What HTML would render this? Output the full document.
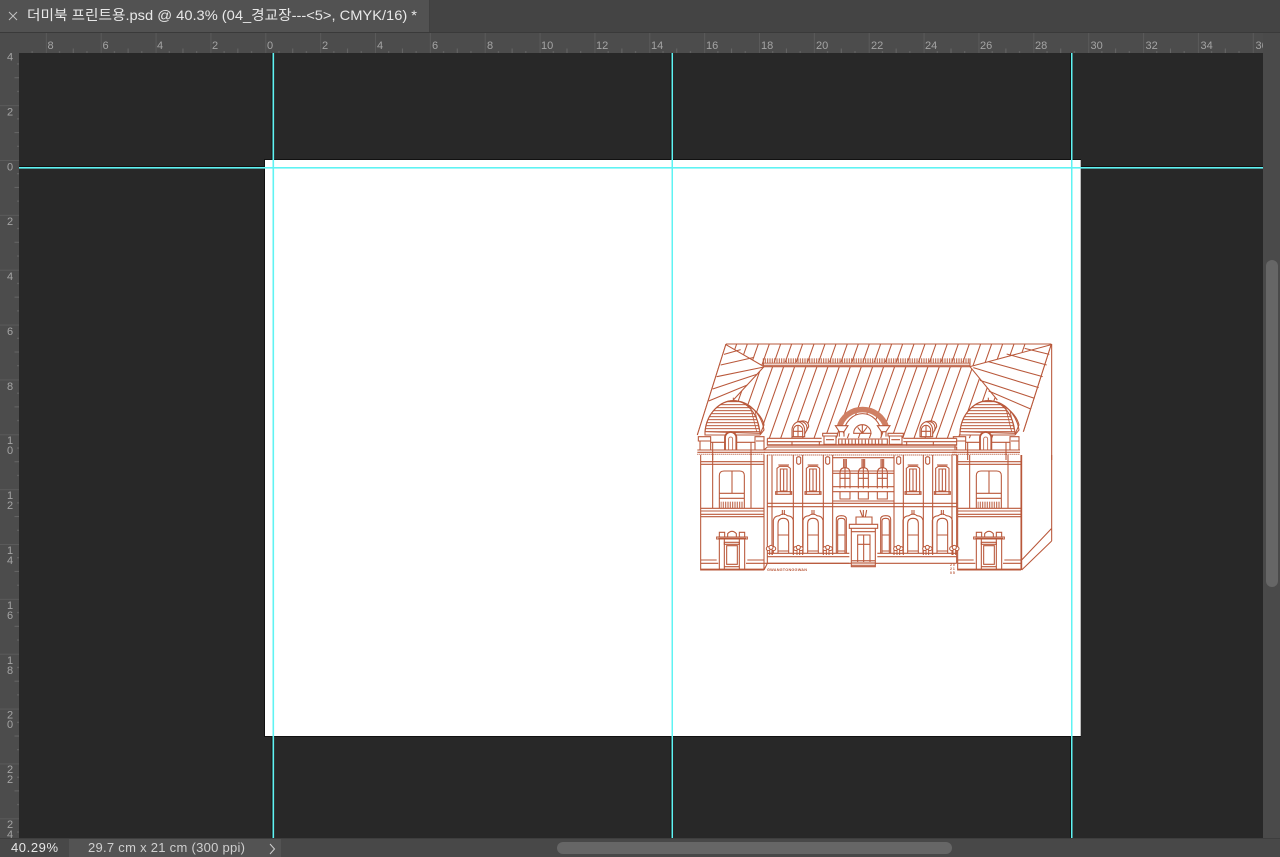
<!DOCTYPE html>
<html><head><meta charset="utf-8"><style>
html,body{margin:0;padding:0;background:#282828;width:1280px;height:857px;overflow:hidden}
svg{display:block}
text{font-family:"Liberation Sans","Noto Sans CJK KR",sans-serif}
</style></head><body>
<svg width="1280" height="857" viewBox="0 0 1280 857" xmlns="http://www.w3.org/2000/svg">
<defs>
<filter id="soft" x="-2%" y="-2%" width="104%" height="104%"><feGaussianBlur stdDeviation=".22"/></filter>
<clipPath id="rulerClip"><rect x="19" y="33" width="1244" height="20"/></clipPath>
<pattern id="rh" patternUnits="userSpaceOnUse" x="265.3" y="33" width="54.86" height="20">
<rect width="54.86" height="20" fill="#4c4c4c"/>
<path d="M.5 0V20" stroke="#5a5a5a" fill="none"/>
<path d="M13.7 18V20M27.4 15.5V20M41.1 18V20" stroke="#666" fill="none"/>
</pattern>
<pattern id="rv" patternUnits="userSpaceOnUse" x="0" y="160" width="19" height="54.86">
<rect width="19" height="54.86" fill="#4c4c4c"/>
<path d="M0 .5H19" stroke="#5a5a5a" fill="none"/>
<path d="M17 13.7H19M14.5 27.4H19M17 41.1H19" stroke="#666" fill="none"/>
</pattern>
<pattern id="hatch" patternUnits="userSpaceOnUse" width="10" height="9">
<path d="M0 2H10" stroke="#b9583a" stroke-width="3"/>
</pattern>
<pattern id="hatchFine" patternUnits="userSpaceOnUse" width="6" height="5">
<path d="M0 1.5H6" stroke="#b9583a" stroke-width="2.6"/>
</pattern>
<pattern id="vt" patternUnits="userSpaceOnUse" width="7" height="10">
<path d="M2 0V10" stroke="#b9583a" stroke-width="3"/>
</pattern>
<clipPath id="roofMid"><path d="M108 27H1084L840 95L922 195L1000 310H232L130 195L222 95Z"/></clipPath>

<g id="dome">
<path d="M45 290C50 235 90 197 130 197C180 197 215 240 222 285L210 300H45Z" fill="#fff"/>
<path d="M45 290C50 235 90 197 130 197C170 197 205 235 210 295Z" fill="url(#hatch)" stroke="#b9583a" stroke-width="3.2"/>
<path d="M170 210C200 225 218 250 222 270L210 298" fill="none" stroke="#b9583a" stroke-width="3.2"/>
<path d="M182 218L200 290M195 228L208 285" fill="none" stroke="#b9583a" stroke-width="2.4"/>
<path d="M130 197V188" stroke="#b9583a" stroke-width="3.2"/>
<path d="M25 305H62V318H25ZM30 318H62V345H30ZM62 322H105M140 322H195M62 322V345M195 322V345M195 305H222V345H195ZM198 318H222" fill="#fff" stroke="#b9583a" stroke-width="3.2"/>
<path d="M105 345V308A17 17 0 0 1 139 308V345" fill="#fff" stroke="#b9583a" stroke-width="5.5"/>
<path d="M116 345V312A6 6 0 0 1 128 312V345" fill="#fff" stroke="#b9583a" stroke-width="2.4"/>
<path d="M22 345H225M22 352H225" stroke="#b9583a" stroke-width="3.2" fill="none"/>
<path d="M22 358H225" stroke="#b9583a" stroke-width="3.4" stroke-dasharray="3 3" fill="none"/>
<path d="M68 322V375M183 322V375" stroke="#b9583a" stroke-width="3.2" fill="none"/>
</g>

<g id="smallDormer">
<path d="M-24 40V18C-22 2 -10 -6 2 -6C14 -10 26 -4 26 10L14 32V40Z" fill="#fff" stroke="#b9583a" stroke-width="3.2"/>
<path d="M-6 -5C8 -2 16 8 14 32M2 -6C16 -4 24 6 20 22" fill="none" stroke="#b9583a" stroke-width="3.2"/>
<path d="M-20 40V20A13 13 0 0 1 8 20V40ZM-6 8V40M-20 24H8" fill="#fff" stroke="#b9583a" stroke-width="3.2"/>
</g>

<g id="wing" fill="none" stroke="#b9583a" stroke-width="3.2">
<path d="M32 0V345H222M222 0V345M32 20H222M32 28H222M68 0V160M183 0V160"/>
<path d="M32 160H222M32 168H222M32 178H222M32 185H222"/>
<path d="M88 160V62Q88 48 102 48H149Q163 48 163 62V160M126 48V115M88 115H163M88 130H163"/>
<rect x="92" y="140" width="68" height="20" fill="url(#vt)" stroke="none"/>
<path d="M32 315H80M172 315H222M32 325H85M168 325H222"/>
<path d="M32 343H222" stroke-width="4"/>
<path d="M85 250H168M80 246H172V252H80Z" fill="#fff"/>
<path d="M88 232H104V246H88ZM148 232H164V246H148ZM113 236Q126 222 139 236V246H113Z" fill="#fff"/>
<path d="M88 252V345M103 252V345M148 252V345M164 252V345"/>
<path d="M110 272H142V328H110ZM103 262H148V268H103ZM103 335H148" />
</g>

<g id="upWin" fill="none" stroke="#b9583a" stroke-width="3.2">
<path d="M-20 118V40L-12 34H12L20 40V118H-20M-24 110H24V118H-24ZM-10 42H10V108H-10ZM0 42V108"/>
<path d="M-16 30H16"/>
</g>

<g id="lowWin" fill="none" stroke="#b9583a" stroke-width="3.2">
<path d="M-30 295V196Q-28 183 -12 182Q0 172 12 182Q28 183 30 196V295"/>
<path d="M-16 295V206Q-16 190 0 190Q16 190 16 206V295M-16 240H16M-16 288H16"/>
<path d="M-3 180V165M3 180V165"/>
</g>

<g id="narWin" fill="none" stroke="#b9583a" stroke-width="3.2">
<path d="M-15 295V192Q-15 182 0 182Q15 182 15 192V295M-11 295V198Q-11 190 0 190Q11 190 11 198V295M-11 240H11M-11 288H11"/>
</g>

<g id="archWin" fill="none" stroke="#b9583a" stroke-width="3.2">
<path d="M-15 100V55Q-15 38 0 38Q15 38 15 55V100M0 12V100M-4 12V38M4 12V38M-15 70H15"/>
</g>

<g id="scroll" fill="#fff" stroke="#b9583a" stroke-width="3">
<circle cx="-8" cy="-4" r="6"/><circle cx="8" cy="-4" r="6"/><circle cx="0" cy="-8" r="6"/>
<path d="M-4 15V0M4 15V0" fill="none"/>
</g>
</defs>

<rect width="1280" height="857" fill="#282828"/>

<!-- top bar -->
<rect x="0" y="0" width="1280" height="33" fill="#444"/>
<rect x="0" y="0" width="429" height="32" fill="#525252"/>
<path d="M429.5 0V32" stroke="#404040"/>
<path d="M0 32.5H1280" stroke="#3a3a3a"/>
<path d="M9 12L17 20M17 12L9 20" stroke="#c0c0c0" stroke-width="1" fill="none"/>
<text x="27" y="20" font-size="14" fill="#e8e8e8" textLength="390" lengthAdjust="spacingAndGlyphs">더미북 프린트용.psd @ 40.3% (04_경교장---&lt;5&gt;, CMYK/16) *</text>

<!-- horizontal ruler -->
<rect x="0" y="33" width="1263" height="20" fill="url(#rh)"/>
<g font-size="11" fill="#a4a4a4" clip-path="url(#rulerClip)">
<text x="47.5" y="49">8</text><text x="102.5" y="49">6</text><text x="157" y="49">4</text><text x="212" y="49">2</text><text x="267" y="49">0</text><text x="322" y="49">2</text><text x="377" y="49">4</text><text x="432" y="49">6</text><text x="487" y="49">8</text>
<text x="541" y="49">10</text><text x="596" y="49">12</text><text x="651" y="49">14</text><text x="706" y="49">16</text><text x="761" y="49">18</text><text x="816" y="49">20</text><text x="871" y="49">22</text><text x="925" y="49">24</text><text x="980" y="49">26</text><text x="1035" y="49">28</text><text x="1090.5" y="49">30</text><text x="1145.5" y="49">32</text><text x="1200.5" y="49">34</text><text x="1255.5" y="49">36</text>
</g>

<!-- vertical ruler -->
<rect x="0" y="53" width="19" height="785" fill="url(#rv)"/>
<rect x="0" y="33" width="19" height="20" fill="#4c4c4c"/>
<g font-size="11" fill="#a4a4a4" text-anchor="middle">
<text x="10" y="60.5">4</text><text x="10" y="115.5">2</text><text x="10" y="170.5">0</text><text x="10" y="225">2</text><text x="10" y="280">4</text><text x="10" y="335">6</text><text x="10" y="390">8</text>
<text x="10" y="444">1</text><text x="10" y="454">0</text>
<text x="10" y="499">1</text><text x="10" y="509">2</text>
<text x="10" y="554">1</text><text x="10" y="564">4</text>
<text x="10" y="609">1</text><text x="10" y="619">6</text>
<text x="10" y="664">1</text><text x="10" y="674">8</text>
<text x="10" y="718.5">2</text><text x="10" y="728">0</text>
<text x="10" y="773">2</text><text x="10" y="783">2</text>
<text x="10" y="828">2</text><text x="10" y="838">4</text>
</g>

<!-- document -->
<rect x="264" y="159" width="817" height="578" fill="#111"/>
<rect x="265" y="160" width="815" height="576" fill="#fff"/>
<rect x="1080" y="160" width="1" height="576" fill="#bdbdbd"/>

<!-- building -->
<g filter="url(#soft)">
<g transform="translate(690 335) scale(.33333)" fill="none" stroke="#b9583a" stroke-width="3.2">
<path d="M108 27H1084M108 27L22 300M1084 27L1000 290M1085 27V375"/>
<g clip-path="url(#roofMid)">
<path d="M140 27L40 310M172 27L72 310M205 27L105 310M238 27L138 310M272 27L172 310M305 27L205 310M338 27L238 310M372 27L272 310M405 27L305 310M438 27L338 310M472 27L372 310M505 27L405 310M538 27L438 310M572 27L472 310M605 27L505 310M638 27L538 310M672 27L572 310M705 27L605 310M738 27L638 310M772 27L672 310M805 27L705 310M838 27L738 310M872 27L772 310M905 27L805 310M938 27L838 310M972 27L872 310M1005 27L905 310"/>
</g>
<path d="M222 95L108 29L22 300L130 195Z" fill="#fff" stroke="none"/>
<path d="M840 95L1084 29L1000 290L922 195Z" fill="#fff" stroke="none"/>
<path d="M108 29L222 95L130 195M1084 29L840 95L922 195"/>
<path d="M108 27L22 300M1084 27L1000 290"/>
<path d="M102 58L152 44M92 90L192 67M80 125L222 96M68 162L200 118M56 198L172 150"/>
<path d="M1004 40L1078 58M950 57L1070 90M895 80L1058 125M850 98L1046 158M870 136L1034 190M896 168L1022 222"/>
<!-- ridge -->
<rect x="220" y="82" width="620" height="14" fill="#fff" stroke="none"/>
<rect x="220" y="70" width="620" height="14" fill="url(#vt)" stroke="none"/>
<rect x="220" y="82" width="620" height="13" fill="url(#hatchFine)" stroke="none"/>
<path d="M220 95H840M220 70V95M840 70V95"/>

<use href="#dome"/>
<use href="#dome" x="765"/>

<use href="#smallDormer" x="330" y="265"/>
<use href="#smallDormer" x="714" y="265"/>

<!-- pediment -->
<path d="M460 295A58 68 0 0 1 575 295" stroke="#b9583a" stroke-width="3.2" fill="#fff"/>
<path d="M447 280C465 205 570 205 590 280" stroke="#cf7f63" stroke-width="17" fill="none"/>
<path d="M436 272H474L462 290H448ZM562 272H600L588 290H574Z" fill="#fff"/>
<path d="M448 290V305M462 290V305M574 290V305M588 290V305"/>
<path d="M491 295A26 26 0 0 1 543 295ZM517 270V295M517 295L503 277M517 295L531 277"/>
<!-- central band -->
<rect x="232" y="310" width="568" height="22" fill="#fff" stroke="none"/>
<path d="M232 310H395M640 310H800M232 320H395M640 320H800M232 310V332M800 310V332M306 320V332M388 320V332M650 320V332M730 320V332"/>
<path d="M232 330H800" stroke-width="4.5"/>
<path d="M398 295H442V303H398ZM594 295H640V303H594ZM402 303H438V328H402ZM598 303H636V328H598ZM408 314H432M604 314H630" fill="#fff"/>
<path d="M446 312H592V328H446ZM456 314V328M466 314V328M476 314V328M486 314V328M496 314V328M506 314V328M516 314V328M526 314V328M536 314V328M546 314V328M556 314V328M566 314V328M576 314V328"/>
<path d="M222 345L232 336H800V345M222 345H800M222 352H800"/>
<path d="M232 360H800" stroke-width="3.4" stroke-dasharray="3 3"/>
</g>

<g transform="translate(690 455) scale(.33333)" fill="none" stroke="#b9583a" stroke-width="3.2">
<use href="#wing"/>
<use href="#wing" x="771"/>
<!-- right side -->
<path d="M995 0V345M995 315L1085 220M995 345L1085 258M1085 0V258"/>
<!-- centre verticals -->
<path d="M232 0V325M246 0V300M310 0V300M338 0V300M400 0V300M428 0V300M612 0V300M640 0V300M700 0V300M728 0V300M786 0V300M800 0V325"/>
<path d="M232 145H800M232 155H800"/>
<path d="M428 8H612"/>
<use href="#upWin" x="281"/><use href="#upWin" x="369"/><use href="#upWin" x="669"/><use href="#upWin" x="757"/>
<use href="#archWin" x="465"/><use href="#archWin" x="520"/><use href="#archWin" x="577"/>
<path d="M428 48H612M428 55H612M428 95H612M428 110H612M428 138H612" />
<path d="M450 110V132H480V110M505 110V132H535V110M562 110V132H592V110"/>
<!-- lamps -->
<path d="M320 8Q326 2 332 8V24Q326 32 320 24ZM407 8Q413 2 419 8V24Q413 32 407 24ZM620 8Q626 2 632 8V24Q626 32 620 24ZM707 8Q713 2 719 8V24Q713 32 707 24Z" fill="#fff"/>
<use href="#lowWin" x="280"/><use href="#lowWin" x="369"/><use href="#lowWin" x="669"/><use href="#lowWin" x="757"/>
<use href="#narWin" x="454"/><use href="#narWin" x="587"/>
<path d="M232 295H478M562 295H800M232 305H478M562 305H800M222 325H800"/>
<use href="#scroll" x="243" y="285"/><use href="#scroll" x="325" y="285"/><use href="#scroll" x="413" y="285"/><use href="#scroll" x="625" y="285"/><use href="#scroll" x="712" y="285"/><use href="#scroll" x="793" y="285"/>
<path d="M222 345L232 325M232 325H478" />
<!-- portico -->
<path d="M484 335V220H556V335ZM478 208H563V220H478ZM484 230H556" fill="#fff"/>
<path d="M503 322V240H540V322M521 240V322M503 268H540"/>
<rect x="485" y="315" width="70" height="20" fill="url(#hatchFine)" stroke="none"/>
<path d="M498 208V186H546V208M498 186H546M510 165L518 186M530 165L526 186M520 165V186"/>
</g>
<text x="767" y="571" font-size="3.8" fill="#b9583a" textLength="40" font-weight="bold">GWANGTONGGWAN</text>
<g font-size="3.5" fill="#b9583a" font-weight="bold">
<text x="950" y="566">2 0</text><text x="950" y="570">2 1</text><text x="950" y="574">0 5</text>
</g>
</g>

<!-- guides -->
<g>
<rect x="272.5" y="53" width="1.6" height="785" fill="#5ff3f3"/>
<rect x="671.5" y="53" width="1.5" height="785" fill="#5ff3f3"/>
<rect x="1071" y="53" width="1.5" height="785" fill="#5ff3f3"/>
<rect x="19" y="167" width="1244" height="1.6" fill="#5ff3f3"/>
<rect x="271.5" y="53" width="1" height="107" fill="#111"/>
<rect x="670.5" y="53" width="1" height="107" fill="#111"/>
<rect x="1070" y="53" width="1" height="107" fill="#111"/>
<rect x="271.5" y="736" width="1" height="102" fill="#111"/>
<rect x="670.5" y="736" width="1" height="102" fill="#111"/>
<rect x="1070" y="736" width="1" height="102" fill="#111"/>
<rect x="19" y="166" width="245" height="1" fill="#111"/>
<rect x="1081" y="166" width="182" height="1" fill="#111"/>
</g>

<!-- right scrollbar -->
<rect x="1263" y="33" width="17" height="824" fill="#4a4a4a"/>
<rect x="1266" y="260" width="12" height="327" rx="6" fill="#666"/>

<!-- status bar -->
<rect x="0" y="838" width="1280" height="19" fill="#484848"/>
<path d="M0 838.5H1280" stroke="#3e3e3e"/>
<rect x="69" y="839" width="212" height="18" fill="#535353"/>
<text x="11" y="852" font-size="13" fill="#e6e6e6" textLength="47">40.29%</text>
<text x="88" y="852" font-size="13" fill="#cfcfcf" textLength="157">29.7 cm x 21 cm (300 ppi)</text>
<path d="M270 844L274.5 849L270 854" stroke="#cfcfcf" stroke-width="1" fill="none"/>
<rect x="557" y="842" width="395" height="12" rx="6" fill="#666"/>
</svg>
</body></html>
